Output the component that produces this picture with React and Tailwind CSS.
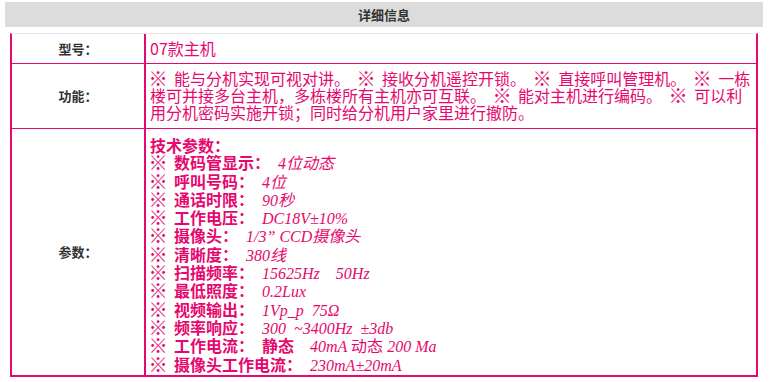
const specs = [
  { label: '数码管显示：', value: <>4位动态</> },
  { label: '呼叫号码：', value: <>4位</> },
  { label: '通话时限：', value: <>90秒</> },
  { label: '工作电压：', value: <>DC18V±10%</> },
  { label: '摄像头：', value: <>1/3” CCD摄像头</> },
  { label: '清晰度：', value: <>380线</> },
  { label: '扫描频率：', value: <>15625Hz{'\u2002\u2002'}50Hz</> },
  { label: '最低照度：', value: <>0.2Lux</> },
  { label: '视频输出：', value: <>1Vp_p{'\u2002'}75Ω</> },
  { label: '频率响应：', value: <>300{'\u2002'}~3400Hz{'\u2002'}±3db</> },
  {
    label: '工作电流：',
    value: (
      <>
        <span className="font-bold not-italic font-['Noto_Sans_CJK_SC',sans-serif]">静态</span>
        {'\u2002\u2002'}40mA <span className="not-italic font-['Noto_Sans_CJK_SC',sans-serif]">动态</span> 200 Ma
      </>
    ),
  },
  { label: '摄像头工作电流：', value: <>230mA±20mA</> },
];

// reference-mark glyph, drawn a little larger than the CJK font gives it
function Mark() {
  return <span className="inline-block scale-[1.2]">※</span>;
}

export default function App() {
  return (
    <div className="w-[770px] h-[382px] bg-white pt-[2px] pl-[5px] font-['Noto_Sans_CJK_SC','Liberation_Sans',sans-serif]">
      {/* Title bar */}
      <div className="w-[758px] h-[25px] bg-[#dcdcdc] flex items-center justify-center text-[13px] font-bold text-[#333]">
        详细信息
      </div>

      {/* Detail table */}
      <div className="ml-[5px] mt-[6px] w-[748px] border-t border-t-[#e6e6e6] border-x-2 border-b-2 border-x-[#e6086e] border-b-[#e6086e]">
        <div className="flex h-[30px] border-b border-[#e6086e]">
          <div className="w-[134px] shrink-0 border-r-2 border-[#e6086e] flex items-center justify-center text-[13px] font-bold text-[#333]">
            型号：
          </div>
          <div className="flex-1 pl-[4px] flex items-center text-[16px] leading-[17px] text-[#e6086e]">
            07款主机
          </div>
        </div>

        <div className="flex h-[65px] border-b border-[#e6086e]">
          <div className="w-[134px] shrink-0 border-r-2 border-[#e6086e] flex items-center justify-center text-[13px] font-bold text-[#333]">
            功能：
          </div>
          <div className="flex-1 pl-[4px] pt-[6px] text-[16px] leading-[17px] text-[#e6086e] whitespace-nowrap">
            <Mark />{'\u2002'}能与分机实现可视对讲。{'\u2002'}<Mark />{'\u2002'}接收分机遥控开锁。{'\u2002'}<Mark />{'\u2002'}直接呼叫管理机。{'\u2002'}<Mark />{'\u2002'}一栋
            <br />
            楼可并接多台主机，多栋楼所有主机亦可互联。{'\u2002'}<Mark />{'\u2002'}能对主机进行编码。{'\u2002'}<Mark />{'\u2002'}可以利
            <br />
            用分机密码实施开锁；同时给分机用户家里进行撤防。
          </div>
        </div>

        <div className="flex h-[246px]">
          <div className="w-[134px] shrink-0 border-r-2 border-[#e6086e] flex items-center justify-center text-[13px] font-bold text-[#333]">
            参数：
          </div>
          <div className="flex-1 pl-[4px] pt-[8px] text-[16px] leading-[17.3px] text-[#e6086e] whitespace-nowrap">
            <div className="font-bold">技术参数：</div>
            {specs.map((s) => (
              <div key={s.label}>
                <span className="font-bold"><Mark />{'\u2002'}{s.label}</span>
                <span className="italic font-normal font-['Liberation_Serif','Noto_Sans_CJK_SC',serif]">
                  {'\u2002'}{s.value}
                </span>
              </div>
            ))}
          </div>
        </div>
      </div>
    </div>
  );
}
